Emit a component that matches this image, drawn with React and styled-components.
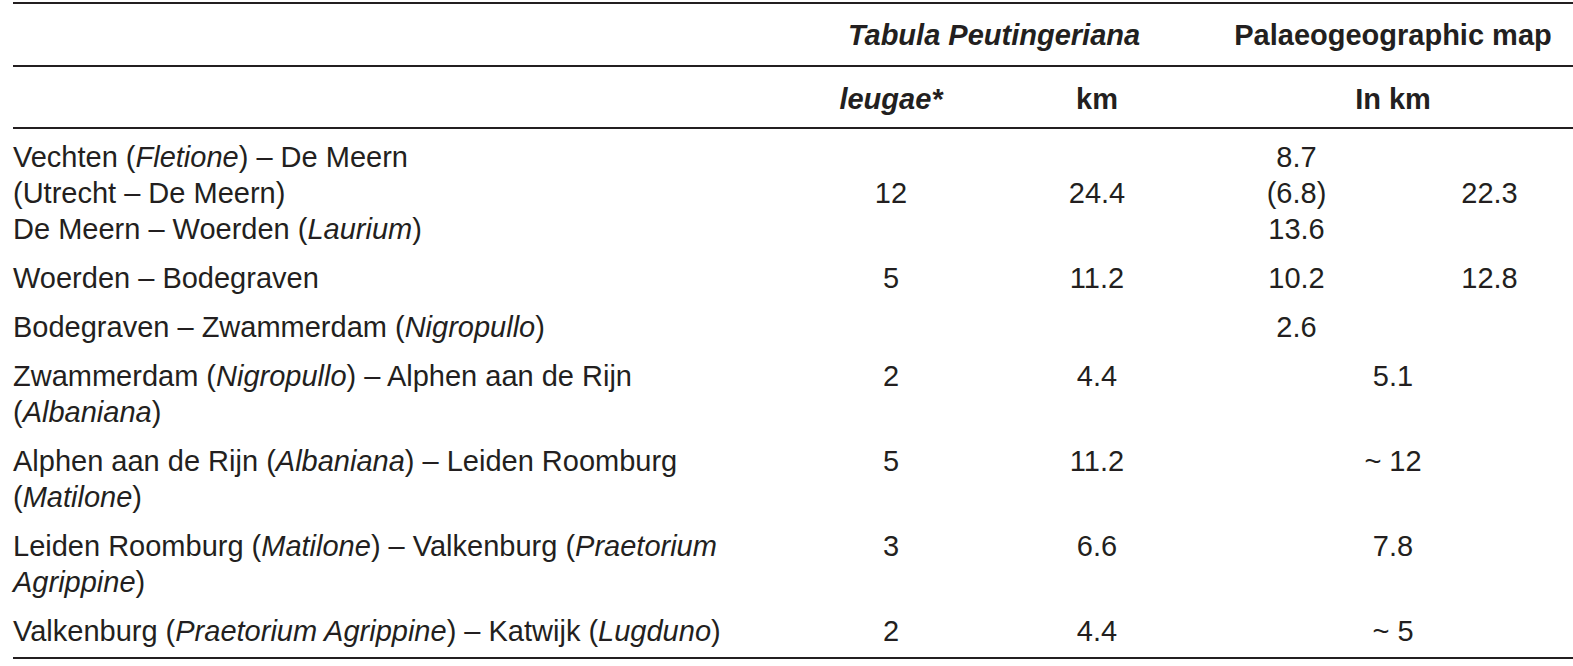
import React from 'react'
import styled, { createGlobalStyle } from 'styled-components'

const GlobalStyle = createGlobalStyle`
  html, body {
    margin: 0;
    padding: 0;
    background: #ffffff;
    overflow: hidden;
  }
  body {
    font-family: "Liberation Sans", Arial, Helvetica, sans-serif;
    color: #231f20;
  }
`

const Page = styled.div`
  padding: 2px 0 0 13px;
  width: 1600px;
`

const Table = styled.table`
  border-collapse: collapse;
  table-layout: fixed;
  width: 1573px;
  font-size: 29px;
  line-height: 36px;
`

const HeadRow = styled.tr`
  border-top: ${p => (p.$top ? '2px solid #231f20' : 'none')};
  border-bottom: 2px solid #231f20;

  & > th {
    padding-top: ${p => p.$padTop}px;
    padding-bottom: ${p => p.$padBottom}px;
  }
`

const HeadCell = styled.th`
  padding-left: 0;
  padding-right: 0;
  font-weight: bold;
  font-style: ${p => (p.$italic ? 'italic' : 'normal')};
  text-align: center;
  white-space: nowrap;
`

const BodyRow = styled.tr`
  border-bottom: ${p => (p.$last ? '2px solid #231f20' : 'none')};

  & > td {
    padding-top: ${p => (p.$first ? 10 : 6)}px;
    padding-bottom: ${p => (p.$last ? 8 : 7)}px;
  }
`

const LabelCell = styled.td`
  padding-left: 0;
  padding-right: 0;
  text-align: left;
  vertical-align: top;
  white-space: nowrap;
`

const ValueCell = styled.td`
  padding-left: 0;
  padding-right: 0;
  text-align: center;
  vertical-align: ${p => (p.$middle ? 'middle' : 'top')};
  white-space: nowrap;
`

const Name = styled.em`
  font-style: italic;
`

const rows = [
  {
    label: (
      <>
        Vechten (<Name>Fletione</Name>) – De Meern
        <br />
        (Utrecht – De Meern)
        <br />
        De Meern – Woerden (<Name>Laurium</Name>)
      </>
    ),
    leugae: '12',
    km: '24.4',
    map: (
      <>
        8.7
        <br />
        (6.8)
        <br />
        13.6
      </>
    ),
    total: '22.3',
    middle: true,
  },
  { label: 'Woerden – Bodegraven', leugae: '5', km: '11.2', map: '10.2', total: '12.8' },
  {
    label: (
      <>
        Bodegraven – Zwammerdam (<Name>Nigropullo</Name>)
      </>
    ),
    leugae: '',
    km: '',
    map: '2.6',
    total: '',
  },
  {
    label: (
      <>
        Zwammerdam (<Name>Nigropullo</Name>) – Alphen aan de Rijn
        <br />
        (<Name>Albaniana</Name>)
      </>
    ),
    leugae: '2',
    km: '4.4',
    merged: '5.1',
  },
  {
    label: (
      <>
        Alphen aan de Rijn (<Name>Albaniana</Name>) – Leiden Roomburg
        <br />
        (<Name>Matilone</Name>)
      </>
    ),
    leugae: '5',
    km: '11.2',
    merged: '~ 12',
  },
  {
    label: (
      <>
        Leiden Roomburg (<Name>Matilone</Name>) – Valkenburg (<Name>Praetorium</Name>
        <br />
        <Name>Agrippine</Name>)
      </>
    ),
    leugae: '3',
    km: '6.6',
    merged: '7.8',
  },
  {
    label: (
      <>
        Valkenburg (<Name>Praetorium Agrippine</Name>) – Katwijk (<Name>Lugduno</Name>)
      </>
    ),
    leugae: '2',
    km: '4.4',
    merged: '~ 5',
  },
]

export default function App() {
  return (
    <>
      <GlobalStyle />
      <Page>
        <Table>
          <colgroup>
            <col style={{ width: 775 }} />
            <col style={{ width: 206 }} />
            <col style={{ width: 206 }} />
            <col style={{ width: 193 }} />
            <col style={{ width: 193 }} />
          </colgroup>
          <thead>
            <HeadRow $top $padTop={13} $padBottom={12}>
              <HeadCell />
              <HeadCell colSpan={2} $italic>
                Tabula Peutingeriana
              </HeadCell>
              <HeadCell colSpan={2}>Palaeogeographic map</HeadCell>
            </HeadRow>
            <HeadRow $padTop={14} $padBottom={10}>
              <HeadCell />
              <HeadCell $italic>leugae*</HeadCell>
              <HeadCell>km</HeadCell>
              <HeadCell colSpan={2}>In km</HeadCell>
            </HeadRow>
          </thead>
          <tbody>
            {rows.map((r, i) => (
              <BodyRow key={i} $first={i === 0} $last={i === rows.length - 1}>
                <LabelCell>{r.label}</LabelCell>
                <ValueCell $middle={r.middle}>{r.leugae}</ValueCell>
                <ValueCell $middle={r.middle}>{r.km}</ValueCell>
                {r.merged !== undefined ? (
                  <ValueCell colSpan={2}>{r.merged}</ValueCell>
                ) : (
                  <>
                    <ValueCell>{r.map}</ValueCell>
                    <ValueCell $middle={r.middle}>{r.total}</ValueCell>
                  </>
                )}
              </BodyRow>
            ))}
          </tbody>
        </Table>
      </Page>
    </>
  )
}
